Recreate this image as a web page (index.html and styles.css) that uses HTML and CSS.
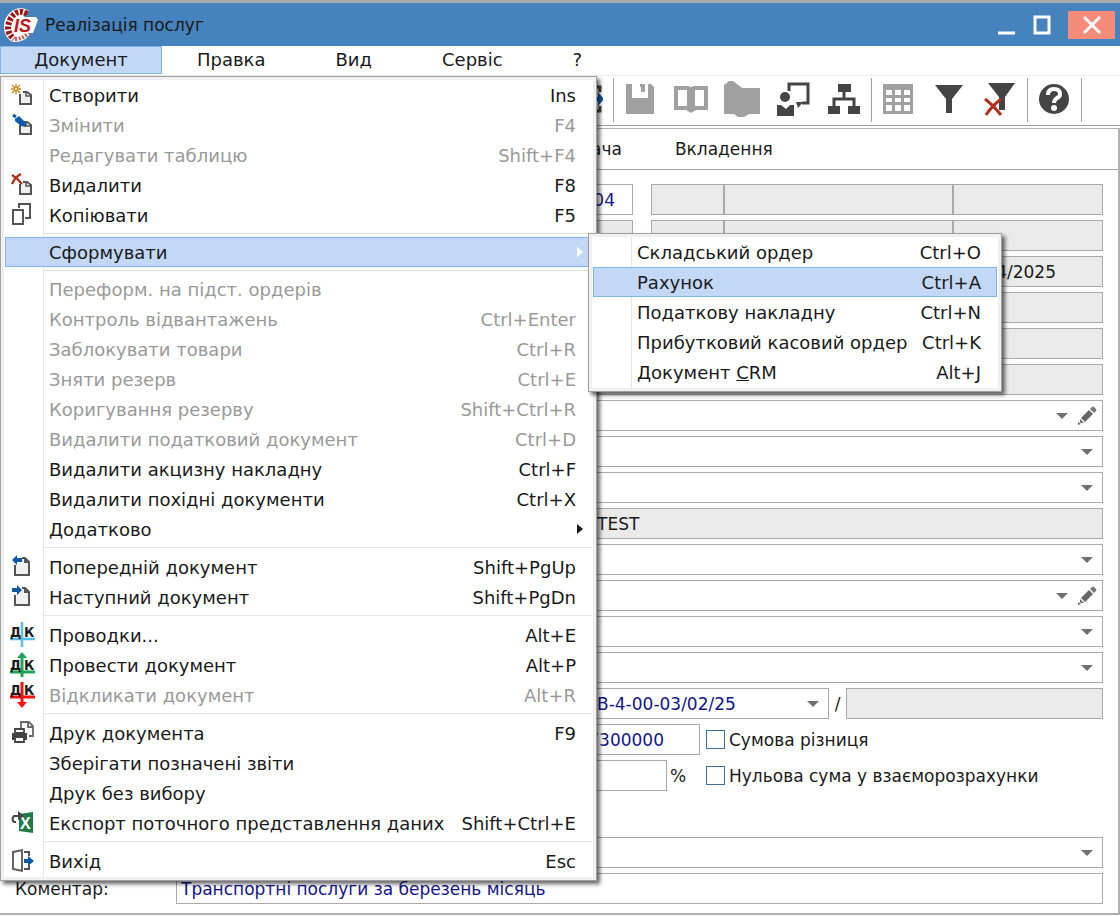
FILE: index.html
```html
<!DOCTYPE html>
<html lang="uk">

<head>
  <meta charset="UTF-8" />
  <meta name="viewport" content="width=device-width, initial-scale=1.0" />
  <title>Реалізація послуг</title>
  <link rel="stylesheet" href="styles.css">
</head>

<body>
  <!-- shapes shared by several icons -->
  <svg class="defs" aria-hidden="true">
    <symbol id="page" viewBox="0 0 26 26">
      <path d="M10 12v10h11v-9l-4-3h-4" fill="#f0f0f0" stroke="#555" stroke-width="2" />
      <path d="M16 10v4h5" fill="none" stroke="#555" stroke-width="1.5" />
    </symbol>
    <symbol id="pencil" viewBox="0 0 20 20">
      <path d="M4 12l8-8 4 4-8 8z" fill="#666" />
      <path d="M13 3l2-2q1-1 2 0l2 2q1 1 0 2l-2 2z" fill="#777" />
      <path d="M3 13l4 4-3 0-1-1zM1 16l3 2-3 1z" fill="#666" />
    </symbol>
  </svg>

  <div class="window">
    <header class="titlebar">
      <svg class="logo" viewBox="0 0 34 36" aria-hidden="true">
        <path d="M25 4Q17-2 8 4Q0 10 0 19Q0 31 9 35Q20 36 26 27L20 8z" fill="#fff" />
        <path d="M23 7Q14 1 7 11Q0 24 10 32" fill="none" stroke="#a01418" stroke-width="6" stroke-dasharray="3 1.6" />
        <path d="M11 32q9 0 14-7" fill="none" stroke="#c06060" stroke-width="4" stroke-dasharray="2 1.6" />
        <path d="M13 10h19l2 3-5 13H9z" fill="#fff" />
        <text x="10" y="25" class="logo-text">IS</text>
      </svg>
      <h1>Реалізація послуг</h1>
      <div class="window-buttons">
        <button aria-label="Згорнути"><svg width="18" height="20" viewBox="0 0 18 20"><path d="M0 18h17" stroke="#fff" stroke-width="3" /></svg></button>
        <button aria-label="Розгорнути"><svg width="18" height="20" viewBox="0 0 18 20"><path d="M2 2h14v16H2z" fill="none" stroke="#fff" stroke-width="3" /></svg></button>
        <button class="close" aria-label="Закрити"><svg width="18" height="18" viewBox="0 0 18 18"><path d="M1 1l16 16M17 1L1 17" stroke="#fff" stroke-width="3" /></svg></button>
      </div>
    </header>

    <nav class="menubar">
      <button class="active">Документ</button>
      <button>Правка</button>
      <button>Вид</button>
      <button>Сервіс</button>
      <button>?</button>

      <ul class="menu" role="menu">
        <li><button role="menuitem"><span class="icon"><svg viewBox="0 0 26 26"><use href="#page" /><path d="M6 2v10M1 7h10M2 3l8 8M10 3l-8 8" stroke="#c98a2b" stroke-width="1.5" /><circle cx="6" cy="7" r="1" fill="#fff" /></svg></span>Створити<kbd>Ins</kbd></button></li>
        <li><button role="menuitem" disabled><span class="icon"><svg viewBox="0 0 26 26"><use href="#page" /><path d="M3 3l3 2" stroke="#0a5aa5" stroke-width="3" /><path d="M5 7l4-3 7 7 0 4-5-1-6-5z" fill="#0a5aa5" /></svg></span>Змінити<kbd>F4</kbd></button></li>
        <li><button role="menuitem" disabled><span class="icon"></span>Редагувати таблицю<kbd>Shift+F4</kbd></button></li>
        <li><button role="menuitem"><span class="icon"><svg viewBox="0 0 26 26"><use href="#page" /><path d="M2 3q5 3 10 9M11 2Q5 5 2 12" fill="none" stroke="#b0301c" stroke-width="2.4" /></svg></span>Видалити<kbd>F8</kbd></button></li>
        <li><button role="menuitem"><span class="icon"><svg viewBox="0 0 26 26"><path d="M3 8h10v14H3zM9 6V2h11v14h-5" fill="none" stroke="#555" stroke-width="2" /></svg></span>Копіювати<kbd>F5</kbd></button></li>
        <li class="separator tight"></li>
        <li>
          <button role="menuitem" class="selected"><span class="icon"></span>Сформувати<span class="arrow"></span></button>
          <ul class="menu submenu" role="menu">
            <li><button role="menuitem"><span class="icon"></span>Складський ордер<kbd>Ctrl+O</kbd></button></li>
            <li><button role="menuitem" class="selected"><span class="icon"></span>Рахунок<kbd>Ctrl+A</kbd></button></li>
            <li><button role="menuitem"><span class="icon"></span>Податкову накладну<kbd>Ctrl+N</kbd></button></li>
            <li><button role="menuitem"><span class="icon"></span>Прибутковий касовий ордер<kbd>Ctrl+K</kbd></button></li>
            <li><button role="menuitem"><span class="icon"></span>Документ&nbsp;<u>C</u>RM<kbd>Alt+J</kbd></button></li>
          </ul>
        </li>
        <li class="separator tight"></li>
        <li><button role="menuitem" disabled><span class="icon"></span>Переформ. на підст. ордерів</button></li>
        <li><button role="menuitem" disabled><span class="icon"></span>Контроль відвантажень<kbd>Ctrl+Enter</kbd></button></li>
        <li><button role="menuitem" disabled><span class="icon"></span>Заблокувати товари<kbd>Ctrl+R</kbd></button></li>
        <li><button role="menuitem" disabled><span class="icon"></span>Зняти резерв<kbd>Ctrl+E</kbd></button></li>
        <li><button role="menuitem" disabled><span class="icon"></span>Коригування резерву<kbd>Shift+Ctrl+R</kbd></button></li>
        <li><button role="menuitem" disabled><span class="icon"></span>Видалити податковий документ<kbd>Ctrl+D</kbd></button></li>
        <li><button role="menuitem"><span class="icon"></span>Видалити акцизну накладну<kbd>Ctrl+F</kbd></button></li>
        <li><button role="menuitem"><span class="icon"></span>Видалити похідні документи<kbd>Ctrl+X</kbd></button></li>
        <li><button role="menuitem"><span class="icon"></span>Додатково<span class="arrow"></span></button></li>
        <li class="separator"></li>
        <li><button role="menuitem"><span class="icon"><svg viewBox="0 0 26 26"><path d="M5 11v10h14V8l-4-4h-3" fill="#f0f0f0" stroke="#555" stroke-width="2" /><path d="M14 3v6h6z" fill="#555" /><path d="M2 6l5-5v3h5v4H7v3z" fill="#0a5aa5" /></svg></span>Попередній документ<kbd>Shift+PgUp</kbd></button></li>
        <li><button role="menuitem"><span class="icon"><svg viewBox="0 0 26 26"><path d="M5 11v10h14V8l-4-4h-3" fill="#f0f0f0" stroke="#555" stroke-width="2" /><path d="M14 3v6h6z" fill="#555" /><path d="M12 6L7 1v3H2v4h5v3z" fill="#0a5aa5" /></svg></span>Наступний документ<kbd>Shift+PgDn</kbd></button></li>
        <li class="separator"></li>
        <li><button role="menuitem"><span class="icon"><svg viewBox="0 0 26 26"><path d="M12 0v25M0 17h25" stroke="#5bbde8" stroke-width="2.5" /><text class="dk" x="0" y="15">Д</text><text class="dk" x="14" y="15">К</text></svg></span>Проводки...<kbd>Alt+E</kbd></button></li>
        <li><button role="menuitem"><span class="icon"><svg viewBox="0 0 26 26"><path d="M12 3v22M0 20h25" stroke="#1ea35a" stroke-width="3" /><path d="M7 6l5-6 5 6z" fill="#1ea35a" /><text class="dk" x="0" y="18">Д</text><text class="dk" x="14" y="18">К</text></svg></span>Провести документ<kbd>Alt+P</kbd></button></li>
        <li><button role="menuitem" disabled><span class="icon"><svg viewBox="0 0 26 26"><path d="M12 0v22M0 15h25" stroke="#f11" stroke-width="3" /><path d="M7 20l5 6 5-6z" fill="#f11" /><text class="dk" x="0" y="13">Д</text><text class="dk" x="14" y="13">К</text></svg></span>Відкликати документ<kbd>Alt+R</kbd></button></li>
        <li class="separator"></li>
        <li><button role="menuitem"><span class="icon"><svg viewBox="0 0 26 26"><path d="M11 8V2h8l4 4v10h-4M18 2v5h5" fill="none" stroke="#666" stroke-width="1.8" /><path d="M5 9h9v4H5z" fill="#fff" stroke="#444" stroke-width="1.8" /><path d="M2 13h15v7H2z" fill="#444" /><path d="M5 17h9v5H5z" fill="#fff" stroke="#444" stroke-width="1.8" /></svg></span>Друк документа<kbd>F9</kbd></button></li>
        <li><button role="menuitem"><span class="icon"></span>Зберігати позначені звіти</button></li>
        <li><button role="menuitem"><span class="icon"></span>Друк без вибору</button></li>
        <li><button role="menuitem"><span class="icon"><svg viewBox="0 0 26 26"><path d="M9 4l14-2v21L9 21z" fill="#1f7a48" /><text class="excel" x="10" y="19">X</text><path d="M6 12H4q-3-3 0-6h5" fill="none" stroke="#444" stroke-width="2" /><path d="M8 1l6 5-6 4z" fill="#444" /></svg></span>Експорт поточного представлення даних<kbd>Shift+Ctrl+E</kbd></button></li>
        <li class="separator"></li>
        <li><button role="menuitem"><span class="icon"><svg viewBox="0 0 26 26"><path d="M3 4l9-2v21l-9-2z" fill="#fff" stroke="#555" stroke-width="1.8" /><path d="M14 4h5v4M19 17v4h-5" fill="none" stroke="#555" stroke-width="2" /><path d="M14 11h4V8l6 5-6 5v-3h-4z" fill="#0a5aa5" /></svg></span>Вихід<kbd>Esc</kbd></button></li>
      </ul>
    </nav>

    <div class="toolbar">
      <div class="tools">
        <button aria-label="Вихід"><svg width="32" height="32" viewBox="0 0 32 32"><path d="M22 4h7v5M29 23v5h-7" fill="none" stroke="#444" stroke-width="3" /><path d="M22 14h5V9l6 7-6 7v-5h-5z" fill="#0a5aa5" /></svg></button>
      </div>
      <div class="tools">
        <button aria-label="Зберегти" disabled><svg width="30" height="32" viewBox="0 0 30 32"><path d="M1 1h6v14h16V1h3l3 3v27H1z" fill="#a0a0a0" /><path d="M15 1h5v8h-4V4h-1z" fill="#a0a0a0" /></svg></button>
        <button aria-label="Довідник" disabled><svg width="34" height="32" viewBox="0 0 34 32"><path d="M0 3h14l3 1 3-1h14v24H22l-5 3-5-3H0zm4 4v16h9V7zm17 0v16h9V7z" fill="#a0a0a0" fill-rule="evenodd" /></svg></button>
        <button aria-label="Папка" disabled><svg width="38" height="36" viewBox="0 0 38 36"><path d="M1 4l5-4h4l9 7h18v26H26l-5 3h-6l-4-3H1z" fill="#a0a0a0" /></svg></button>
        <button aria-label="Менеджер"><svg width="34" height="34" viewBox="0 0 34 34"><path d="M13 9V2h19v19h-6" fill="none" stroke="#444" stroke-width="3" /><path d="M20 20h7l-5 6zM1 23h4l5 4 4-4h4v11H1z" fill="#444" /><circle cx="9" cy="15" r="5" fill="#444" /></svg></button>
        <button aria-label="Структура"><svg width="34" height="32" viewBox="0 0 34 32"><path d="M11 1h13v8H11zM1 23h12v8H1zM21 23h12v8H21z" fill="#444" /><path d="M17 8v8M7 24v-8h20v8" fill="none" stroke="#444" stroke-width="3" /></svg></button>
      </div>
      <div class="tools">
        <button aria-label="Таблиця" disabled><svg width="32" height="32" viewBox="0 0 32 32"><path d="M1 1h30v30H1z" fill="#a0a0a0" /><path d="M4 7h6v5H4zM13 7h6v5h-6zM22 7h6v5h-6zM4 15h6v4H4zM13 15h6v4h-6zM22 15h6v4h-6zM4 22h6v6H4zM13 22h6v6h-6zM22 22h6v6h-6z" fill="#fff" /></svg></button>
        <button aria-label="Фільтр"><svg width="28" height="28" viewBox="0 0 28 28"><path d="M0 0h28L17 14v14h-6V14z" fill="#444" /></svg></button>
        <button aria-label="Скинути фільтр"><svg width="32" height="34" viewBox="0 0 32 34"><path d="M4 1h27L21 15v13h-6V15z" fill="#444" /><path d="M1 17q8 6 16 16" fill="none" stroke="#b0301c" stroke-width="3" /><path d="M17 17Q7 25 2 33" fill="none" stroke="#b0301c" stroke-width="3" /></svg></button>
      </div>
      <div class="tools last">
        <button aria-label="Допомога"><svg width="32" height="32" viewBox="0 0 32 32"><circle cx="16" cy="16" r="15" fill="#444" /><path d="M10 12q0-6 6-6 6 0 6 5 0 3-3 4-3 2-3 5" fill="none" stroke="#fff" stroke-width="4" /><circle cx="16" cy="25" r="3" fill="#fff" /></svg></button>
      </div>
    </div>

    <main class="document">
      <div class="tabs">
        <button>ача</button>
        <button>Вкладення</button>
      </div>

      <form class="form">
        <div class="row">
          <input class="number" type="text" value="04" aria-label="Номер">
          <div class="cells"><input type="text" aria-label="Код" disabled><input type="text" aria-label="Назва" disabled><input type="text" aria-label="Сума" disabled></div>
        </div>
        <div class="row">
          <input class="number" type="text" aria-label="Дата" disabled>
          <div class="cells"><input type="text" aria-label="Код" disabled><input type="text" aria-label="Назва" disabled><input type="text" aria-label="Сума" disabled></div>
        </div>
        <div class="row"><input class="period" type="text" value="4/2025" aria-label="Період" disabled></div>
        <div class="row"><input type="text" aria-label="Підстава" disabled></div>
        <div class="row"><input type="text" aria-label="Рахунок" disabled></div>
        <div class="row"><input type="text" aria-label="Накладна" disabled></div>
        <div class="row"><div class="combo editable"><select aria-label="Контрагент"></select><svg viewBox="0 0 20 20"><use href="#pencil" /></svg></div></div>
        <div class="row"><div class="combo"><select aria-label="Договір"></select></div></div>
        <div class="row"><div class="combo"><select aria-label="Платник"></select></div></div>
        <div class="row"><input class="company" type="text" value="TEST" aria-label="Підприємство" disabled></div>
        <div class="row"><div class="combo"><select aria-label="Підрозділ"></select></div></div>
        <div class="row"><div class="combo editable"><select aria-label="Одержувач"></select><svg viewBox="0 0 20 20"><use href="#pencil" /></svg></div></div>
        <div class="row"><div class="combo"><select aria-label="Операція"></select></div></div>
        <div class="row"><div class="combo"><select aria-label="Умови"></select></div></div>
        <div class="row contract">
          <div class="combo"><select aria-label="Контракт"><option>В-4-00-03/02/25</option></select></div>
          <span class="slash">/</span>
          <input type="text" aria-label="Додаток" disabled>
        </div>
        <div class="row">
          <input class="rate" type="text" value="7300000" aria-label="Курс">
          <label class="check"><input type="checkbox"> Сумова різниця</label>
        </div>
        <div class="row">
          <input class="percent" type="text" aria-label="Відсоток">
          <span class="unit">%</span>
          <label class="check"><input type="checkbox"> Нульова сума у взаєморозрахунки</label>
        </div>
        <div class="row spaced"><div class="combo"><select aria-label="Стан"></select></div></div>
        <div class="row">
          <label class="caption" for="comment">Коментар:</label>
          <input class="comment" id="comment" type="text" value="Транспортні послуги за березень місяць">
        </div>
      </form>
    </main>
  </div>
</body>

</html>
```
FILE: styles.css
```css
* {
  margin: 0;
  padding: 0;
  box-sizing: border-box;
}

body {
  background: #fff;
  color: #1a1a1a;
  font: 17px "DejaVu Sans", Verdana, sans-serif;
}

button,
input,
select {
  font: inherit;
  color: inherit;
}

button {
  border: none;
  background: none;
}

ul {
  list-style: none;
}

.defs {
  display: none;
}

/* title bar */
.titlebar {
  display: flex;
  align-items: center;
  height: 46px;
  padding: 0 5px 0 4px;
  border-top: 3px solid #a9a9a9;
  background: #4682bd;
}

.logo {
  width: 34px;
  height: 36px;
}

.logo-text {
  fill: #c4161c;
  font: italic bold 18px "Liberation Sans", Arial, sans-serif;
}

.titlebar h1 {
  flex: 1;
  padding-left: 7px;
  font-size: 17px;
  font-weight: normal;
}

.window-buttons {
  display: flex;
  align-items: center;
  gap: 17px;
}

.window-buttons button {
  display: flex;
  align-items: center;
  justify-content: center;
}

.window-buttons .close {
  width: 47px;
  height: 28px;
  background: #f58b78;
}

/* menu bar */
.menubar {
  position: relative;
  display: flex;
  height: 30px;
  border-bottom: 1px solid #eee;
  font-size: 18px;
}

.menubar > button {
  padding: 0 34px 2px;
  height: 28px;
  border: 1px solid transparent;
}

.menubar > .active {
  width: 162px;
  padding: 0 0 2px;
  border-color: #7eb4ea;
  background: #c3d7f7;
}

/* drop-down menu */
.menu {
  position: absolute;
  z-index: 2;
  top: 30px;
  left: 0;
  width: 597px;
  padding: 3px 4px 4px;
  border: 1px solid #a0a0a0;
  background: linear-gradient(90deg, transparent 38px, #e4e4e4 38px, #e4e4e4 39px, transparent 39px) 4px 0 no-repeat #fff;
  box-shadow: inset 0 0 0 3px #f0f0f0, 3px 3px 4px rgba(0, 0, 0, 0.6);
}

.menu li {
  position: relative;
}

.menu button {
  display: flex;
  align-items: center;
  width: 100%;
  height: 30px;
  padding-right: 15px;
  border: 1px solid transparent;
  text-align: left;
  white-space: nowrap;
}

.menu button:disabled {
  color: #999;
}

.menu .selected {
  border-color: #7eb4ea;
  background: #c3d7f7;
}

.menu .icon {
  flex: none;
  width: 43px;
  height: 26px;
  padding-left: 4px;
}

.menu svg {
  width: 26px;
  height: 26px;
}

.dk {
  fill: #1a1a1a;
  font: bold 14px "DejaVu Sans Condensed", "DejaVu Sans", sans-serif;
}

.excel {
  fill: #fff;
  font: bold 16px "Liberation Sans", Arial, sans-serif;
}

.menu kbd {
  margin-left: auto;
  font: inherit;
}

.menu .arrow {
  margin: 0 -7px 0 auto;
  border: 5px solid transparent;
  border-left: 6px solid #1a1a1a;
  border-right: none;
}

.menu .selected .arrow {
  border-left-color: #fff;
}

.separator {
  height: 8px;
  margin-left: 38px;
  background: linear-gradient(#e4e4e4, #e4e4e4) 0 3px / 100% 1px no-repeat;
}

.separator.tight {
  height: 7px;
}

.submenu {
  top: -4px;
  left: 583px;
  width: 414px;
}

/* toolbar */
.toolbar {
  display: flex;
  height: 50px;
  padding: 2px 0 3px 561px;
  border-bottom: 1px solid #a0a0a0;
}

.tools {
  display: flex;
  padding-right: 1px;
}

.tools + .tools {
  border-left: 1px solid #a0a0a0;
  padding-right: 2px;
}

.tools.last {
  border-right: 1px solid #a0a0a0;
}

.tools button {
  display: flex;
  align-items: center;
  justify-content: center;
  width: 51px;
  padding-bottom: 3px;
}

/* document */
.document {
  margin-top: 2px;
  border: 2px solid #b0b0b0;
  border-left: none;
  border-top-width: 1px;
}

.tabs {
  display: flex;
  gap: 53px;
  height: 41px;
  padding-left: 591px;
  border-bottom: 1px solid #a0a0a0;
}

.form {
  display: flex;
  flex-direction: column;
  gap: 5px;
  padding: 14px 15px 9px;
}

.row {
  display: flex;
  align-items: center;
  padding-left: 161px;
}

.row input:not([type="checkbox"]),
.combo select {
  flex: 1;
  min-width: 0;
  width: 100%;
  height: 31px;
  padding: 0 4px;
  border: 1px solid #a9a9a9;
  background: #fff;
  color: #14148c;
}

.row input:disabled:not([type="checkbox"]) {
  background: #eaeaea;
  color: #1a1a1a;
}

.row .number:not([type="checkbox"]) {
  flex: 0 0 457px;
  padding-right: 17px;
  text-align: right;
}

.cells {
  display: flex;
  flex: 1;
  margin-left: 18px;
}

.cells input:first-child:not([type="checkbox"]) {
  flex: 0 0 73px;
}

.cells input:nth-child(2):not([type="checkbox"]) {
  flex: 0 0 229px;
}

.row .period:not([type="checkbox"]) {
  padding-right: 46px;
  text-align: right;
}

.row .company:not([type="checkbox"]) {
  padding-left: 420px;
}

.combo {
  position: relative;
  display: flex;
  flex: 1;
}

.combo select {
  appearance: none;
}

.combo::after {
  content: "";
  position: absolute;
  top: 13px;
  right: 10px;
  border: 6px solid transparent;
  border-top-color: #707070;
  border-bottom: none;
}

.combo.editable::after {
  right: 35px;
}

.combo svg {
  position: absolute;
  top: 6px;
  right: 6px;
  width: 20px;
  height: 20px;
}

.contract .combo {
  flex: 0 0 653px;
}

.contract select {
  padding-left: 420px;
}

.slash {
  width: 17px;
  text-align: center;
}

.row .rate:not([type="checkbox"]) {
  flex: 0 0 524px;
  padding-right: 35px;
  text-align: right;
}

.row .percent:not([type="checkbox"]) {
  flex: 0 0 491px;
}

.unit {
  width: 33px;
  padding-left: 3px;
}

.check {
  display: flex;
  align-items: center;
  gap: 4px;
  padding-left: 6px;
}

.check input {
  appearance: none;
  width: 19px;
  height: 19px;
  border: 1px solid #3f6ea5;
  background: #fff;
}

.spaced {
  margin-top: 41px;
}

.row:has(.caption) {
  padding-left: 0;
}

.caption {
  width: 161px;
}
```
